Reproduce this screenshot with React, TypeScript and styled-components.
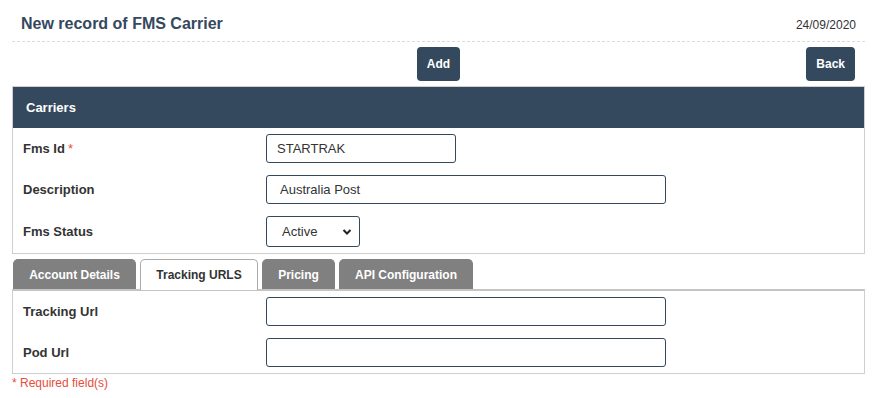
import React from "react";
import styled, { createGlobalStyle } from "styled-components";

const Global = createGlobalStyle`
  html, body { margin: 0; padding: 0; background: #fff; }
  body { font-family: "Liberation Sans", Arial, sans-serif; color: #333; }
  * { box-sizing: border-box; }
`;

const Page = styled.div`
  padding: 0 16px 0 12px;
`;

const Header = styled.div`
  display: flex;
  justify-content: space-between;
  align-items: flex-end;
  height: 42px;
  padding: 0 9px 8px 9px;
  border-bottom: 1px dashed #dcdcdc;
`;

const Title = styled.h1`
  margin: 0;
  font-size: 16px;
  line-height: 18px;
  font-weight: bold;
  color: #34495e;
`;

const DateText = styled.span`
  font-size: 12px;
  line-height: 14px;
  color: #333;
  padding-bottom: 1px;
`;

const Toolbar = styled.div`
  display: grid;
  grid-template-columns: 1fr auto 1fr;
  align-items: start;
  padding: 5px 0 0 0;
  height: 44px;
`;

const Button = styled.button<{ $align?: string }>`
  justify-self: ${(p) => p.$align || "center"};
  grid-column: ${(p) => (p.$align === "end" ? 3 : 2)};
  margin-right: ${(p) => (p.$align === "end" ? "10px" : "0")};
  height: 34px;
  padding: 0 10px;
  border: none;
  border-radius: 4px;
  background: #34495e;
  color: #fff;
  font-family: "Liberation Sans", Arial, sans-serif;
  font-size: 12px;
  font-weight: bold;
`;

const Panel = styled.section`
  border: 1px solid #cfcfcf;
`;

const PanelHeading = styled.div`
  background: #34495e;
  color: #fff;
  font-size: 13px;
  font-weight: bold;
  height: 41px;
  display: flex;
  align-items: center;
  padding-left: 13px;
`;

const Body = styled.div<{ $pt: number; $pb: number }>`
  display: grid;
  grid-template-columns: 243px 1fr;
  row-gap: 12px;
  align-items: center;
  padding: ${(p) => p.$pt}px 0 ${(p) => p.$pb}px 10px;
`;

const Label = styled.label`
  font-size: 13px;
  font-weight: bold;
  color: #333;
`;

const Star = styled.span`
  color: #e74c3c;
  font-weight: normal;
  margin-left: 3px;
`;

const Input = styled.input<{ $w: number; $pl?: number }>`
  width: ${(p) => p.$w}px;
  height: 29px;
  border: 1px solid #34495e;
  border-radius: 3px;
  padding: 0 0 0 ${(p) => p.$pl ?? 10}px;
  font-family: "Liberation Sans", Arial, sans-serif;
  font-size: 13px;
  color: #333;
  outline: none;
`;

const SelectBox = styled.div`
  position: relative;
  width: 94px;
  height: 31px;
  border: 1px solid #34495e;
  border-radius: 3px;
  display: flex;
  align-items: center;
  padding-left: 15px;
  font-size: 13px;
  color: #333;
`;

const Chevron = styled.svg`
  position: absolute;
  right: 7px;
  top: 11px;
`;

const Tabs = styled.div`
  display: flex;
  gap: 4px;
  margin-top: 5px;
  padding-left: 1px;
`;

const Tab = styled.div<{ $active?: boolean; $w: number }>`
  width: ${(p) => p.$w}px;
  border-radius: 5px 5px 0 0;
  display: flex;
  align-items: center;
  justify-content: center;
  font-size: 12px;
  font-weight: bold;
  background: ${(p) => (p.$active ? "#fff" : "#808080")};
  color: ${(p) => (p.$active ? "#333" : "#fff")};
  border: 1px solid ${(p) => (p.$active ? "#aaa" : "#808080")};
  border-bottom: none;
  position: relative;
  z-index: 1;
  margin-bottom: ${(p) => (p.$active ? "-1px" : "0")};
  height: ${(p) => (p.$active ? "31px" : "30px")};
  padding-bottom: ${(p) => (p.$active ? "1px" : "0")};
`;

const TabPanel = styled.section`
  border: 1px solid #cfcfcf;
  border-top: 2px solid #c4c4c4;
`;

const Required = styled.div`
  color: #e74c3c;
  font-size: 12px;
  margin-top: 2px;
`;

export default function App() {
  return (
    <Page>
      <Global />
      <Header>
        <Title>New record of FMS Carrier</Title>
        <DateText>24/09/2020</DateText>
      </Header>
      <Toolbar>
        <Button>Add</Button>
        <Button $align="end">Back</Button>
      </Toolbar>
      <Panel>
        <PanelHeading>Carriers</PanelHeading>
        <Body $pt={6} $pb={6}>
          <Label>
            Fms Id<Star>*</Star>
          </Label>
          <Input $w={190} defaultValue="STARTRAK" />
          <Label>Description</Label>
          <Input $w={400} $pl={13} defaultValue="Australia Post" />
          <Label>Fms Status</Label>
          <SelectBox>
            Active
            <Chevron width="10" height="8" viewBox="0 0 10 8">
              <path d="M1.5 2 L5 5.5 L8.5 2" fill="none" stroke="#222" strokeWidth="2" />
            </Chevron>
          </SelectBox>
        </Body>
      </Panel>
      <Tabs>
        <Tab $w={123}>Account Details</Tab>
        <Tab $w={118} $active>
          Tracking URLS
        </Tab>
        <Tab $w={73}>Pricing</Tab>
        <Tab $w={134}>API Configuration</Tab>
      </Tabs>
      <TabPanel>
        <Body $pt={6} $pb={6}>
          <Label>Tracking Url</Label>
          <Input $w={400} />
          <Label>Pod Url</Label>
          <Input $w={400} />
        </Body>
      </TabPanel>
      <Required>* Required field(s)</Required>
    </Page>
  );
}
